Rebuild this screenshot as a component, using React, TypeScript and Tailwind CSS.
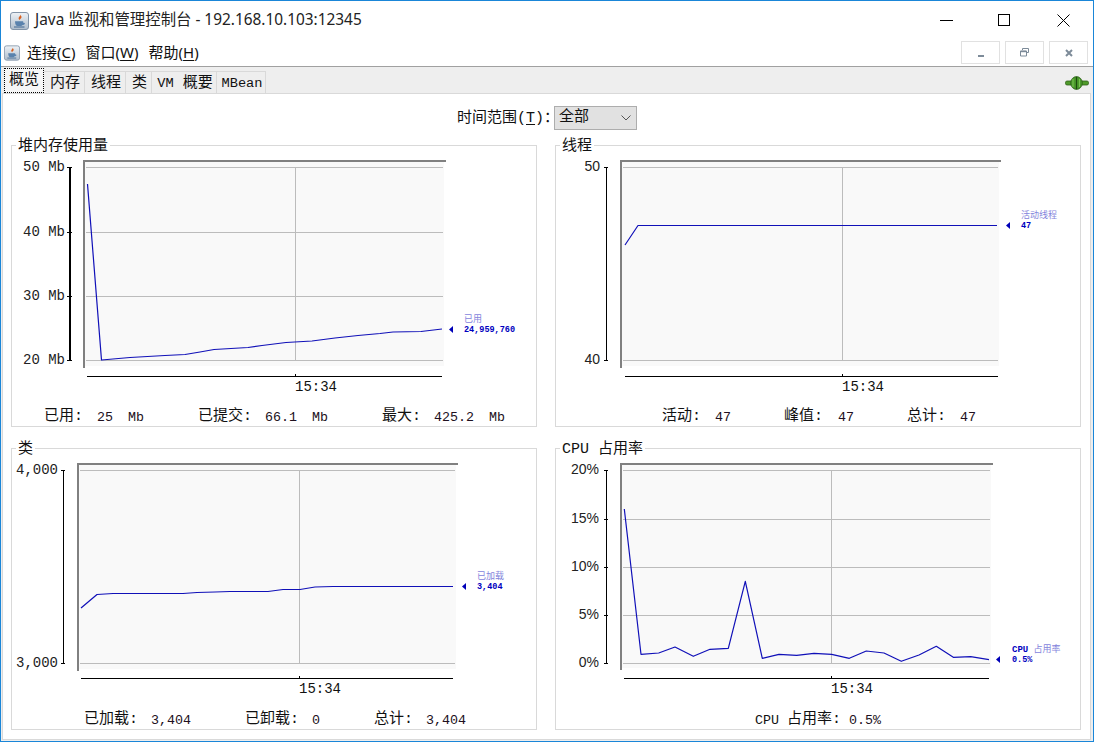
import React from "react";

const mono = "font-['Liberation_Mono','Noto_Sans_CJK_SC',monospace]";
const ui = "font-['Noto_Sans','Noto_Sans_CJK_SC',sans-serif]";
const sansCjk = "font-['Liberation_Sans','Noto_Sans_CJK_SC',sans-serif]";

type ChartProps = {
  ox: number;
  oy: number;
  l: number;
  t: number;
  r: number;
  b: number;
  gridL: number;
  gridR: number;
  gridY: number[];
  vx: number;
  axisX: number;
  axisW: number;
  axisL: number;
  axisR: number;
  axisY: number;
  ticks: { y: number; label: string }[];
  labelEnd: number;
  labelClass: string;
  line: number[][];
  arrowX: number;
  legendX: number;
  legend: React.ReactNode;
  value: string;
};

const LINE = "#1010b8";
const GRID = "#bcbcbc";

function Chart(c: ChartProps) {
  const lastY = Math.floor(c.line[c.line.length - 1][1]);
  const top = c.gridY[0];
  const bottom = c.gridY[c.gridY.length - 1];
  return (
    <svg width={524} height={262} viewBox={`${c.ox} ${c.oy} 524 262`} className="block shrink-0">
      {/* plot frame */}
      <rect x={c.l + 2} y={c.t + 2} width={c.r - c.l - 2} height={c.b - c.t - 2} fill="#f9f9f9" />
      <rect x={c.l} y={c.t} width={c.r - c.l + 2} height={2} fill="#808080" />
      <rect x={c.l} y={c.t} width={2} height={c.b - c.t + 2} fill="#808080" />
      {c.gridY.map((y) => (
        <rect key={y} x={c.gridL} y={y} width={c.gridR - c.gridL} height={1} fill={GRID} />
      ))}
      <rect x={c.vx} y={top} width={1} height={bottom - top} fill={GRID} />

      {/* y axis */}
      <rect x={c.axisX} y={top} width={c.axisW} height={bottom - top + 1} fill="#000" />
      {c.ticks.map((k) => (
        <g key={k.label}>
          <rect x={c.axisX - 2} y={k.y} width={c.axisW + 3} height={1} fill="#000" />
          <text x={c.labelEnd} y={k.y + 4} textAnchor="end" fontSize={14} fill="#222" className={c.labelClass}>
            {k.label}
          </text>
        </g>
      ))}

      {/* x axis */}
      <rect x={c.axisL} y={c.axisY} width={c.axisR - c.axisL} height={1} fill="#000" />
      <rect x={c.vx} y={c.axisY - 2} width={1} height={3} fill="#000" />
      <text x={c.vx} y={c.axisY + 15} fontSize={14} fill="#111" className={mono}>
        15:34
      </text>

      <polyline
        points={c.line.map((p) => p.join(",")).join(" ")}
        fill="none"
        stroke={LINE}
        strokeWidth={1.2}
        strokeLinejoin="round"
      />

      <polygon
        points={`${c.arrowX},${lastY + 0.5} ${c.arrowX + 4},${lastY - 3} ${c.arrowX + 4},${lastY + 4}`}
        fill="#0000b8"
      />
      <text x={c.legendX} y={lastY - 7} fontSize={9} fill="#8484dc" className={mono}>
        {c.legend}
      </text>
      <text x={c.legendX} y={lastY + 3} fontSize={8.5} fontWeight="bold" fill="#0000c0" className={mono}>
        {c.value}
      </text>
    </svg>
  );
}

function Panel({ title, children }: { title: string; children: React.ReactNode }) {
  return (
    <div className="relative flex h-[282px] flex-col border border-[#d9d9d9]">
      <div className={`absolute -top-[7px] left-[4px] bg-white px-[2px] text-[15px] leading-[15px] text-[#111] ${mono}`}>
        {title}
      </div>
      {children}
    </div>
  );
}

function JavaIcon({ w, h }: { w: number; h: number }) {
  return (
    <svg width={w} height={h} viewBox="0 0 19 18" className="shrink-0">
      <defs>
        <linearGradient id="javaBg" x1="0" y1="0" x2="0" y2="1">
          <stop offset="0" stopColor="#eef2f6" />
          <stop offset="1" stopColor="#aebccb" />
        </linearGradient>
      </defs>
      <rect x="0.5" y="0.5" width="18" height="17" rx="2.5" fill="url(#javaBg)" stroke="#8294a8" />
      <path d="M10 2.5c1.2 1.5-2.2 2.6-1.2 4.4.4.7 1 1.1 1 1.1-.2-.9 2.4-1.7 1.6-3.4-.3-.7-.8-1.3-1.4-2.1z" fill="#d9601f" />
      <path d="M5 9.2h8.2v1.2c0 .3 1.7-.1 1.7 1.1 0 1.1-1.9 1.5-2.3 1.5-.5.7-1 1-1.6 1H7.6C6 14 5 12 5 9.2z" fill="#5a82ad" />
      <path d="M4 15h10.5" stroke="#4a6f98" strokeWidth="1.1" />
    </svg>
  );
}

function PlugIcon() {
  return (
    <svg width="24" height="14" viewBox="0 0 24 14" className="shrink-0">
      <rect x="0.5" y="5" width="23" height="4" rx="1.6" fill="#4f9a2a" stroke="#2f5f18" strokeWidth="0.8" />
      <ellipse cx="11.5" cy="7" rx="5.8" ry="6.4" fill="#4a9a2a" stroke="#2a5c16" strokeWidth="0.8" />
      <path d="M11.5 .8v12.4" stroke="#1d4a0e" strokeWidth="1.2" />
      <path d="M8 3v8M14.5 3v8" stroke="#7cc452" strokeWidth="1" />
    </svg>
  );
}

function FrameButton({ children }: { children: React.ReactNode }) {
  return (
    <div className="flex h-[23px] w-[39px] items-center justify-center border border-[#e1e1e1] bg-white">
      {children}
    </div>
  );
}

function Tab({ className, children }: { className: string; children: React.ReactNode }) {
  return (
    <div
      className={`flex h-[22px] items-center justify-center border-t border-r border-[#d9d9d9] pl-[2px] pt-[3px] text-[15px] text-[#111] ${mono} ${className}`}
    >
      {children}
    </div>
  );
}

function MenuItem({ label, mnemonic, className }: { label: string; mnemonic: string; className: string }) {
  return (
    <span className={`pb-[2px] text-[15px] text-[#111] ${ui} ${className}`}>
      {label}(<span className="underline underline-offset-2">{mnemonic}</span>)
    </span>
  );
}

const heapLine = [
  [87.5, 184], [101.5, 360], [130, 357.5], [165, 355.5], [185, 354.5], [200, 352], [214, 349.5], [248, 347.5],
  [262, 345.5], [286, 342.5], [312, 341], [335, 338], [358, 335.5], [380, 333.5], [393, 332], [421, 331.5], [442, 329],
];
const threadLine = [[625, 245], [638, 225.5], [997, 225.5]];
const classLine = [
  [81, 608], [97, 594.5], [113, 593.5], [183, 593.5], [197, 592.5], [215, 592], [230, 591.5], [268, 591.5], [283, 589.5],
  [300, 589.5], [315, 587], [333, 586.5], [453, 586.5],
];
const cpuLine = [
  [624.3, 509], [641, 654.3], [658.7, 653], [675, 647], [693.3, 656.3], [710, 649.3], [728.3, 648.3], [745.3, 581.3],
  [762.3, 658.3], [779, 654.3], [796.7, 655.3], [814, 653.3], [831.7, 654.3], [849.3, 658.3], [866.3, 651], [884, 653],
  [901.3, 661.3], [919, 655], [936.3, 646.3], [953.3, 657.3], [970.7, 656.7], [989, 659.7],
];

export default function App() {
  return (
    <div className="flex h-[742px] w-[1094px] flex-col overflow-hidden border border-[#1a86d8] bg-white">
      {/* title bar */}
      <div className="flex h-[39px] shrink-0 items-center pl-[9px]">
        <JavaIcon w={19} h={18} />
        <span className={`ml-[6px] pb-[2px] text-[15.4px] text-[#222] ${ui}`}>Java 监视和管理控制台 - 192.168.10.103:12345</span>
        <div className="ml-auto flex">
          <div className="flex h-[39px] w-[58px] items-center justify-center">
            <svg width="13" height="13" viewBox="0 0 13 13">
              <path d="M0 6.5h13" stroke="#000" />
            </svg>
          </div>
          <div className="flex h-[39px] w-[58px] items-center justify-center">
            <svg width="13" height="13" viewBox="0 0 13 13">
              <rect x=".5" y=".5" width="11" height="11" fill="none" stroke="#000" />
            </svg>
          </div>
          <div className="flex h-[39px] w-[60px] items-center justify-center">
            <svg width="13" height="13" viewBox="0 0 13 13">
              <path d="M.5.5l12 12M12.5.5l-12 12" stroke="#000" />
            </svg>
          </div>
        </div>
      </div>

      {/* menu bar */}
      <div className="flex h-[27px] shrink-0 items-center border-b border-[#a0a0a0] pl-[3px] pr-[5px]">
        <JavaIcon w={16} h={16} />
        <MenuItem label="连接" mnemonic="C" className="ml-[7px]" />
        <MenuItem label="窗口" mnemonic="W" className="ml-[10px]" />
        <MenuItem label="帮助" mnemonic="H" className="ml-[10px]" />
        <div className="ml-auto mb-[1px] flex gap-[5px]">
          <FrameButton>
            <span className="mt-[6px] block h-[2px] w-[6px] bg-[#7d8b99]" />
          </FrameButton>
          <FrameButton>
            <svg width="9" height="9" viewBox="0 0 9 9">
              <path d="M2.5 2V.5h6v4H7M.5 3h6v5h-6z" fill="none" stroke="#7d8b99" />
              <path d="M.5 3.5h6" stroke="#7d8b99" strokeWidth="1.4" />
            </svg>
          </FrameButton>
          <FrameButton>
            <svg width="8" height="8" viewBox="0 0 8 8">
              <path d="M1 1l6 6M7 1L1 7" stroke="#7d8b99" strokeWidth="2" />
            </svg>
          </FrameButton>
        </div>
      </div>

      {/* tabs */}
      <div className="flex h-[26px] shrink-0 items-end bg-[#eeeeee] pl-[3px] pr-[4px]">
        <div className={`flex h-[25px] w-[40px] items-center justify-center border border-dotted border-black bg-[#f6f6f6] pt-[2px] text-[15px] text-[#111] ${mono}`}>
          概览
        </div>
        <Tab className="w-[41px]">内存</Tab>
        <Tab className="w-[41px]">线程</Tab>
        <Tab className="w-[26px]">类</Tab>
        <Tab className="w-[65px]">
          <span className="text-[13.67px]">VM</span>
          <span className="ml-[9px]">概要</span>
        </Tab>
        <Tab className="w-[49px]">
          <span className="text-[13.67px]">MBean</span>
        </Tab>
        <div className="ml-auto mb-[3px]">
          <PlugIcon />
        </div>
      </div>

      {/* tab content */}
      <div className="flex min-h-0 flex-1 flex-col bg-[#eeeeee] pb-[1px] pl-[1px] pr-[2px]">
        <div className="flex flex-1 flex-col border border-[#d9d9d9] bg-white pl-[8px]">
          <div className="mt-[12px] flex h-[24px] items-center pl-[446px]">
            <span className={`pt-[2px] text-[15px] text-[#111] ${mono}`}>
              时间范围(<span className="underline underline-offset-2">T</span>)：
            </span>
            <div className={`ml-[-5px] flex h-[24px] w-[83px] items-center justify-between border border-[#adadad] bg-[#e1e1e1] pl-[4px] pr-[5px] text-[15px] text-[#111] ${mono}`}>
              全部
              <svg width="10" height="6" viewBox="0 0 10 6">
                <path d="M.5.5L5 5 9.5.5" fill="none" stroke="#555" />
              </svg>
            </div>
          </div>

          <div className="mt-[15px] grid grid-cols-[526px_526px] gap-x-[18px] gap-y-[21px]">
            <Panel title="堆内存使用量">
              <Chart
                ox={12} oy={146} l={83} t={160} r={444} b={366}
                gridL={86} gridR={443} gridY={[167, 232, 296, 360]} vx={295}
                axisX={69} axisW={2} axisL={87} axisR={442} axisY={376}
                ticks={[
                  { y: 167, label: "50 Mb" },
                  { y: 232, label: "40 Mb" },
                  { y: 296, label: "30 Mb" },
                  { y: 360, label: "20 Mb" },
                ]}
                labelEnd={65} labelClass={mono} line={heapLine}
                arrowX={449} legendX={464} legend="已用" value="24,959,760"
              />
              <div className={`flex h-[18px] items-center pl-[32px] pt-[1px] text-[15px] text-[#111] ${mono}`}>
                <span className="w-[53px]">已用:</span>
                <span className="w-[31px] text-[13.33px] text-[#201020]">25</span>
                <span className="w-[70px] text-[13.33px] text-[#201020]">Mb</span>
                <span className="w-[67px]">已提交:</span>
                <span className="w-[47px] text-[13.33px] text-[#201020]">66.1</span>
                <span className="w-[70px] text-[13.33px] text-[#201020]">Mb</span>
                <span className="w-[52px]">最大:</span>
                <span className="w-[55px] text-[13.33px] text-[#201020]">425.2</span>
                <span className="text-[13.33px] text-[#201020]">Mb</span>
              </div>
            </Panel>

            <Panel title="线程">
              <Chart
                ox={556} oy={146} l={620} t={160} r={999} b={366}
                gridL={623} gridR={998} gridY={[167, 360]} vx={842}
                axisX={606} axisW={1} axisL={625} axisR={998} axisY={376}
                ticks={[
                  { y: 167, label: "50" },
                  { y: 360, label: "40" },
                ]}
                labelEnd={600} labelClass={sansCjk} line={threadLine}
                arrowX={1006} legendX={1021} legend="活动线程" value="47"
              />
              <div className={`flex h-[18px] items-center pl-[106px] pt-[1px] text-[15px] text-[#111] ${mono}`}>
                <span className="w-[53px]">活动:</span>
                <span className="w-[69px] text-[13.33px] text-[#201020]">47</span>
                <span className="w-[54px]">峰值:</span>
                <span className="w-[69px] text-[13.33px] text-[#201020]">47</span>
                <span className="w-[53px]">总计:</span>
                <span className="text-[13.33px] text-[#201020]">47</span>
              </div>
            </Panel>

            <Panel title="类">
              <Chart
                ox={12} oy={449} l={77} t={463} r={456} b={669}
                gridL={80} gridR={455} gridY={[470, 663]} vx={299}
                axisX={63} axisW={1} axisL={81} axisR={453} axisY={678}
                ticks={[
                  { y: 470, label: "4,000" },
                  { y: 663, label: "3,000" },
                ]}
                labelEnd={58} labelClass={mono} line={classLine}
                arrowX={462} legendX={477} legend="已加载" value="3,404"
              />
              <div className={`flex h-[18px] items-center pl-[72px] pt-[1px] text-[15px] text-[#111] ${mono}`}>
                <span className="w-[67px]">已加载:</span>
                <span className="w-[94px] text-[13.33px] text-[#201020]">3,404</span>
                <span className="w-[67px]">已卸载:</span>
                <span className="w-[62px] text-[13.33px] text-[#201020]">0</span>
                <span className="w-[52px]">总计:</span>
                <span className="text-[13.33px] text-[#201020]">3,404</span>
              </div>
            </Panel>

            <Panel title="CPU 占用率">
              <Chart
                ox={556} oy={449} l={620} t={463} r={991} b={668}
                gridL={623} gridR={990} gridY={[470, 519, 567, 615, 663]} vx={831}
                axisX={606} axisW={1} axisL={624} axisR={989} axisY={678}
                ticks={[
                  { y: 470, label: "20%" },
                  { y: 519, label: "15%" },
                  { y: 567, label: "10%" },
                  { y: 615, label: "5%" },
                  { y: 663, label: "0%" },
                ]}
                labelEnd={599} labelClass={sansCjk} line={cpuLine}
                arrowX={996} legendX={1012}
                legend={
                  <>
                    <tspan fill="#0000c0" fontWeight="bold">CPU</tspan> 占用率
                  </>
                }
                value="0.5%"
              />
              <div className={`flex h-[18px] items-center pl-[199px] pt-[1px] text-[15px] text-[#111] ${mono}`}>
                <span className="text-[13.33px]">CPU</span>
                <span className="ml-[8px]">占用率:</span>
                <span className="ml-[8px] text-[13.33px] text-[#201020]">0.5%</span>
              </div>
            </Panel>
          </div>
        </div>
      </div>
    </div>
  );
}
